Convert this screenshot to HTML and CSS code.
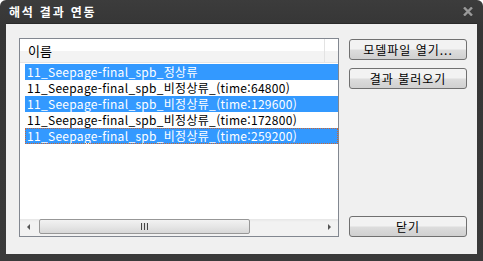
FILE: index.html
```html
<!DOCTYPE html>
<html lang="ko">
<head>
    <meta charset="UTF-8">
    <title>해석 결과 연동</title>
    <link rel="stylesheet" href="styles.css">
</head>
<body>

    <div class="window">

        <div class="titlebar">
            <span class="title">해석 결과 연동</span>
            <svg class="close-btn" width="10" height="9" viewBox="0 0 10 9">
                <path d="M1 0.5 L9 8.5 M9 0.5 L1 8.5" stroke="#9a9a9a" stroke-width="2.4"/>
            </svg>
        </div>

        <div class="client">

            <!-- Lista de resultados -->
            <div class="listview">
                <div class="list-header">
                    <div class="col-name">이름</div>
                    <div class="col-rest"></div>
                </div>
                <div class="list-body">
                    <div class="row selected">11_Seepage-final_spb_정상류</div>
                    <div class="row">11_Seepage-final_spb_비정상류_(time:64800)</div>
                    <div class="row selected">11_Seepage-final_spb_비정상류_(time:129600)</div>
                    <div class="row">11_Seepage-final_spb_비정상류_(time:172800)</div>
                    <div class="row selected focused">11_Seepage-final_spb_비정상류_(time:259200)</div>
                </div>
                <div class="hscroll">
                    <div class="arrow arrow-left"></div>
                    <div class="track">
                        <div class="thumb"><span class="grip"></span></div>
                    </div>
                    <div class="arrow arrow-right"></div>
                </div>
            </div>

            <!-- Botones -->
            <div class="buttons">
                <button class="win-btn">모델파일 열기...</button>
                <button class="win-btn">결과 불러오기</button>
                <button class="win-btn close">닫기</button>
            </div>

        </div>
    </div>

</body>
</html>
```

FILE: styles.css
```css
/* Ventana general */
body {
    margin: 0;
    background-color: #fff;
    font-family: "Noto Sans CJK KR", "DejaVu Sans", sans-serif;
    font-size: 12px;
    color: #000;
}

.window {
    width: 483px;
    height: 261px;
    box-sizing: border-box;
    background: linear-gradient(#3c3c3c, #353535 30px, #3a3a3a);
    border-radius: 6px 6px 0 0;
    padding: 0 6px 7px 6px;
    display: flex;
    flex-direction: column;
}

.titlebar {
    height: 23px;
    display: flex;
    align-items: center;
    justify-content: space-between;
    padding: 0 4px 0 3px;
}

.title {
    color: #fff;
    font-weight: 700;
    font-size: 12px;
    letter-spacing: 1.8px;
}

.close-btn {
    margin-top: -1px;
}

.client {
    flex: 1;
    background-color: #f0f0f0;
    border-top: 1px solid #2a2a2a;
    padding: 14px 10px 17px 13px;
    display: flex;
    gap: 10px;
}

/* --- Lista --- */
.listview {
    width: 320px;
    box-sizing: border-box;
    border: 1px solid #828790;
    background-color: #fff;
    display: flex;
    flex-direction: column;
}

.list-header {
    height: 23px;
    display: flex;
    background: linear-gradient(#fff 50%, #f3f3f3 50%);
    border-bottom: 1px solid #e5e5e5;
}

.col-name {
    width: 296px;
    border-right: 1px solid #e3e3e3;
    padding-left: 8px;
    line-height: 23px;
    font-size: 13px;
}

.list-body {
    flex: 1;
    padding: 1px 0 0 5px;
}

.row {
    height: 16px;
    line-height: 16px;
    padding-left: 2px;
    white-space: nowrap;
    overflow: hidden;
    letter-spacing: 0.3px;
}

.row.selected {
    background-color: #3399ff;
    color: #fff;
}

.row.focused {
    outline: 1px dotted #cc6633;
    outline-offset: -1px;
}

/* --- Barra de desplazamiento --- */
.hscroll {
    height: 17px;
    display: flex;
    background: linear-gradient(#e6e6e6, #f2f2f2 3px, #f2f2f2);
}

.arrow {
    width: 18px;
    position: relative;
}

.arrow::after {
    content: "";
    position: absolute;
    top: 5px;
    border-top: 3px solid transparent;
    border-bottom: 3px solid transparent;
}

.arrow-left::after {
    left: 7px;
    border-right: 3px solid #555;
}

.arrow-right::after {
    left: 8px;
    border-left: 3px solid #555;
}

.track {
    flex: 1;
    padding: 0 1px;
}

.thumb {
    width: 211px;
    height: 15px;
    box-sizing: border-box;
    border: 1px solid #979797;
    border-radius: 2px;
    background: linear-gradient(#f2f2f2, #e6e6e6 50%, #d8d8d8);
    display: flex;
    align-items: center;
    justify-content: center;
}

.grip {
    width: 7px;
    height: 7px;
    background: repeating-linear-gradient(90deg, #444 0 1px, #ddd 1px 3px);
}

/* --- Botones --- */
.buttons {
    width: 118px;
    display: flex;
    flex-direction: column;
    gap: 8px;
    padding-top: 1px;
}

.win-btn {
    height: 21px;
    font-family: "Noto Sans CJK KR", "DejaVu Sans", sans-serif;
    font-size: 12px;
    color: #000;
    border: 1px solid #707070;
    border-radius: 3px;
    background: linear-gradient(#f2f2f2 45%, #dcdcdc 55%, #d0d0d0);
    padding: 0;
    line-height: 19px;
    letter-spacing: 1px;
}

.win-btn.close {
    margin-top: auto;
}
```
